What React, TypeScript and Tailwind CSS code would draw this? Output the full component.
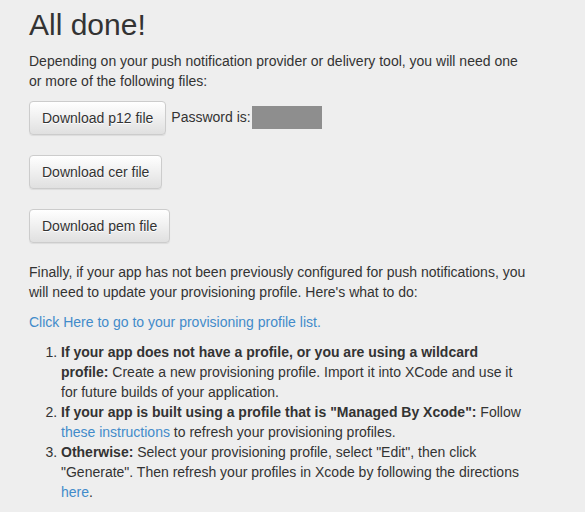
import type { ReactNode } from "react";

function DownloadButton({ children }: { children: ReactNode }) {
  return (
    <button
      type="button"
      className="rounded-[4px] border border-[#cccccc] bg-gradient-to-b from-[#ffffff] to-[#e0e0e0] px-[12px] py-[6px] text-[14px] leading-[20px] text-[#333333] shadow-[0_1px_1px_rgba(0,0,0,0.075)] [text-shadow:0_1px_0_#fff]"
    >
      {children}
    </button>
  );
}

const link = "text-[#428bca]";

export default function App() {
  return (
    <div className="min-h-screen bg-[#eeeeee] font-['Liberation_Sans',Arial,sans-serif] text-[14px] leading-[20px] text-[#333333]">
      <div className="w-[560px] pl-[29px] pt-[8px]">
        <h1 className="text-[30px] leading-[33px] font-normal">All done!</h1>

        <p className="mt-[10px]">
          Depending on your push notification provider or delivery tool, you will need one
          <br />
          or more of the following files:
        </p>

        {/* Download buttons */}
        <div className="mt-[10px] flex flex-col items-start gap-[20px]">
          <div className="flex items-start">
            <DownloadButton>Download p12 file</DownloadButton>
            <span className="ml-[5px] mt-[6px]">Password is:</span>
            <span className="ml-[1px] mt-[5px] h-[23px] w-[70px] bg-[#8e8e8e]" />
          </div>
          <DownloadButton>Download cer file</DownloadButton>
          <DownloadButton>Download pem file</DownloadButton>
        </div>

        <p className="mt-[19px]">
          Finally, if your app has not been previously configured for push notifications, you
          <br />
          will need to update your provisioning profile. Here's what to do:
        </p>

        <p className="mt-[10px]">
          <a href="#" className={link}>
            Click Here to go to your provisioning profile list.
          </a>
        </p>

        <ol className="mt-[10px] list-decimal pl-[32px]">
          <li>
            <b>
              If your app does not have a profile, or you are using a wildcard
              <br />
              profile:
            </b>{" "}
            Create a new provisioning profile. Import it into XCode and use it
            <br />
            for future builds of your application.
          </li>
          <li>
            <b>If your app is built using a profile that is "Managed By Xcode":</b> Follow
            <br />
            <a href="#" className={link}>
              these instructions
            </a>{" "}
            to refresh your provisioning profiles.
          </li>
          <li>
            <b>Otherwise:</b> Select your provisioning profile, select "Edit", then click
            <br />
            "Generate". Then refresh your profiles in Xcode by following the directions
            <br />
            <a href="#" className={link}>
              here
            </a>
            .
          </li>
        </ol>
      </div>
    </div>
  );
}
